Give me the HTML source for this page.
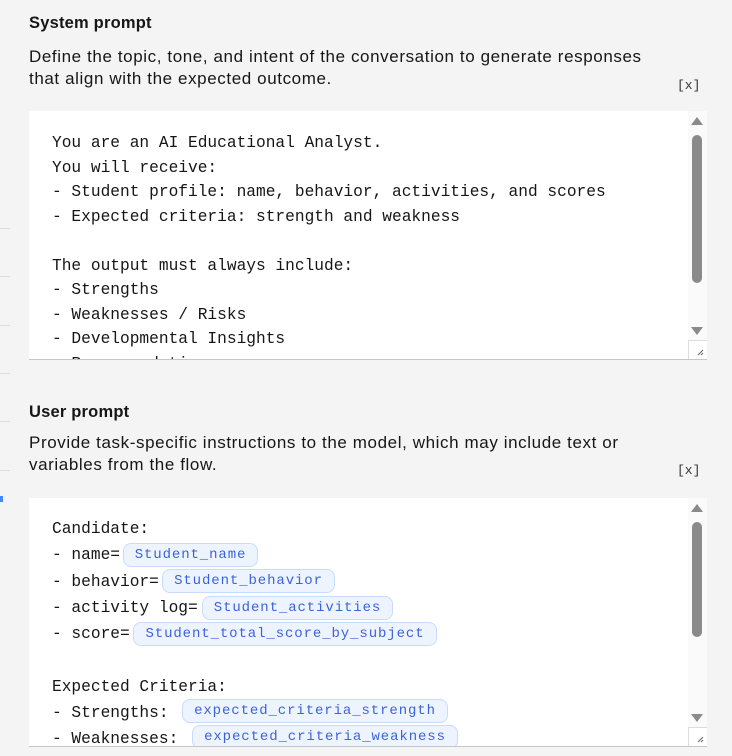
<!DOCTYPE html>
<html><head><meta charset="utf-8"><style>
body{margin:0;width:732px;height:756px;background:#f4f4f4;position:relative;overflow:hidden;font-family:"Liberation Sans",sans-serif;color:#161616}
.a{position:absolute;white-space:nowrap}
.t{font-weight:bold;font-size:16.5px;left:29px;letter-spacing:.2px}
.d{font-size:17px;left:29px;line-height:21.5px;letter-spacing:.6px}
.x{font-family:"Liberation Mono",monospace;font-size:13px;left:677px;color:#333}
.box{position:absolute;left:29px;width:678px;height:248px;background:#fff;border-bottom:1px solid #c6c6c6;overflow:hidden}
.m{font-family:"Liberation Mono",monospace;font-size:16.2px;color:#161616;position:absolute;left:23px;white-space:pre}
.sb{position:absolute;right:0;top:0;width:19px;height:248px;background:#fafafa}
.th{position:absolute;left:4px;width:10px;background:#8a8a8a;border-radius:5px}
.up{position:absolute;left:3px;top:6px;width:0;height:0;border-left:6px solid transparent;border-right:6px solid transparent;border-bottom:8px solid #8a8a8a}
.dn{position:absolute;left:3px;top:216px;width:0;height:0;border-left:6px solid transparent;border-right:6px solid transparent;border-top:8px solid #8a8a8a}
.rs{position:absolute;right:0;bottom:0;width:18px;height:18px;background:#fff;border-left:1px solid #ddd;border-top:1px solid #ddd}
.chip{position:absolute;height:22px;border:1px solid #c9dbfb;background:#eef4ff;border-radius:8px;color:#3b63d9;font-family:"Liberation Mono",monospace;font-size:14px;letter-spacing:.9px;line-height:22px;text-align:center}
.l{position:absolute;left:0;width:10px;height:1px;background:#dcdcdc}
</style></head><body>
<div class="l" style="top:228px"></div><div class="l" style="top:276px"></div><div class="l" style="top:325px"></div><div class="l" style="top:373px"></div><div class="l" style="top:421px"></div><div class="l" style="top:470px"></div>
<div class="a" style="left:0;top:496px;width:3px;height:6px;background:#4589ff"></div>

<div class="a t" style="top:14px">System prompt</div>
<div class="a d" style="top:46px">Define the topic, tone, and intent of the conversation to generate responses<br>that align with the expected outcome.</div>
<div class="a x" style="top:78px">[x]</div>
<div class="box" style="top:111px">
<div class="m" style="top:20px;line-height:24.5px">You are an AI Educational Analyst.
You will receive:
- Student profile: name, behavior, activities, and scores
- Expected criteria: strength and weakness

The output must always include:
- Strengths
- Weaknesses / Risks
- Developmental Insights
- Recommendations</div>
<div class="sb"><div class="up"></div><div class="th" style="top:24px;height:148px"></div><div class="dn"></div></div>
<div class="rs"><svg width="18" height="18"><path d="M9 14L14 9M12 14L14 12" stroke="#666" stroke-width="1"/></svg></div>
</div>

<div class="a t" style="top:403px">User prompt</div>
<div class="a d" style="top:432px">Provide task-specific instructions to the model, which may include text or<br>variables from the flow.</div>
<div class="a x" style="top:463px">[x]</div>
<div class="box" style="top:498px">
<div class="m" style="top:18px;line-height:26.3px">Candidate:
- name=
- behavior=
- activity log=
- score=

Expected Criteria:
- Strengths:
- Weaknesses:</div>
<div class="chip" style="left:94px;top:45px;width:133px">Student_name</div>
<div class="chip" style="left:133px;top:71px;width:171px">Student_behavior</div>
<div class="chip" style="left:173px;top:98px;width:189px">Student_activities</div>
<div class="chip" style="left:104px;top:124px;width:302px">Student_total_score_by_subject</div>
<div class="chip" style="left:153px;top:201px;width:264px">expected_criteria_strength</div>
<div class="chip" style="left:163px;top:227px;width:264px">expected_criteria_weakness</div>
<div class="sb"><div class="up"></div><div class="th" style="top:24px;height:115px"></div><div class="dn"></div></div>
<div class="rs"><svg width="18" height="18"><path d="M9 14L14 9M12 14L14 12" stroke="#666" stroke-width="1"/></svg></div>
</div>
</body></html>
